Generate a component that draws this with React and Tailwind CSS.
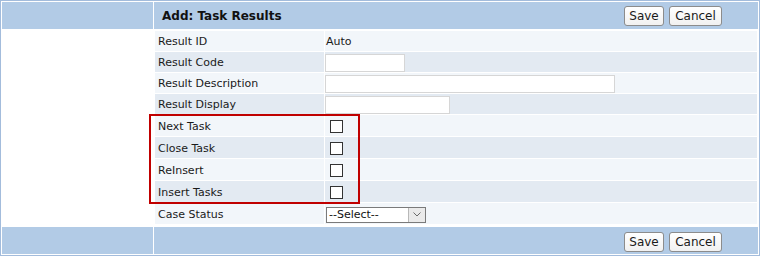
const rows = [
  { label: 'Result ID', kind: 'text', value: 'Auto', h: 'h-[20px]' },
  { label: 'Result Code', kind: 'input', w: 'w-[80px]', h: 'h-[20px]' },
  { label: 'Result Description', kind: 'input', w: 'w-[290px]', h: 'h-[20px]' },
  { label: 'Result Display', kind: 'input', w: 'w-[125px]', h: 'h-[20px]' },
  { label: 'Next Task', kind: 'check', h: 'h-[21px]' },
  { label: 'Close Task', kind: 'check', h: 'h-[21px]' },
  { label: 'ReInsert', kind: 'check', h: 'h-[21px]' },
  { label: 'Insert Tasks', kind: 'check', h: 'h-[21px]' },
  { label: 'Case Status', kind: 'select', h: 'h-[21px]' },
];

const Buttons = () => (
  <div className="flex items-center gap-[5px] pr-[36px]">
    <button className="w-[40px] h-[20px] rounded-[3px] border border-[#8c8c8c] bg-gradient-to-b from-white to-[#f1f1f1] text-[12px] text-[#1a1a1a] leading-none">
      Save
    </button>
    <button className="w-[53px] h-[20px] rounded-[3px] border border-[#8c8c8c] bg-gradient-to-b from-white to-[#f1f1f1] text-[12px] text-[#1a1a1a] leading-none">
      Cancel
    </button>
  </div>
);

const Field = ({ row }) => {
  if (row.kind === 'text') {
    return <span className="pl-[1px] pt-[1px] text-[11px] text-[#1a1a1a]">{row.value}</span>;
  }
  if (row.kind === 'input') {
    return <div className={`${row.w} h-[18px] bg-white border border-[#d6d6d6]`}></div>;
  }
  if (row.kind === 'check') {
    return <div className="ml-[5px] w-[13px] h-[13px] bg-white border border-[#333333]"></div>;
  }
  return (
    <div className="ml-[1px] w-[100px] h-[16px] bg-white border border-[#7a7a7a] flex">
      <span className="flex-1 pl-[2px] text-[11px] leading-[14px] text-[#111]">--Select--</span>
      <span className="w-[17px] h-full bg-[#eaeaea] border-l border-[#b8b8b8] flex items-center justify-center">
        <svg width="8" height="5" viewBox="0 0 8 5">
          <path d="M0.5 0.5 L4 4 L7.5 0.5" fill="none" stroke="#6a6a6a" strokeWidth="1" />
        </svg>
      </span>
    </div>
  );
};

const App = () => {
  return (
    <div className="relative w-[760px] h-[256px] border border-[#a3bcdc] bg-white p-[1px] flex flex-col font-['DejaVu_Sans',Verdana,sans-serif]">
      {/* Header */}
      <div className="flex h-[27px] gap-[1px]">
        <div className="w-[151px] bg-[#b2cbe6]"></div>
        <div className="flex-1 bg-[#b2cbe6] flex items-center justify-between pl-[8px]">
          <span className="pt-[1px] text-[12px] font-bold text-[#111]">Add: Task Results</span>
          <Buttons />
        </div>
      </div>

      {/* Rows */}
      <div className="mt-[2px] flex flex-col gap-[1px] pr-[1px]">
        {rows.map((row, i) => (
          <div key={row.label} className={`flex ${row.h}`}>
            <div className="w-[153px]"></div>
            <div className={`w-[169px] flex items-center pl-[3px] pt-[3px] text-[11px] text-[#1a1a1a] ${i % 2 === 0 ? 'bg-[#f2f6fa]' : 'bg-[#e3eaf2]'}`}>
              {row.label}
            </div>
            <div className={`ml-[1px] flex-1 flex items-center pt-[2px] ${i % 2 === 0 ? 'bg-[#f2f6fa]' : 'bg-[#e3eaf2]'}`}>
              <Field row={row} />
            </div>
          </div>
        ))}
      </div>

      {/* Footer */}
      <div className="mt-auto flex h-[27px] gap-[1px]">
        <div className="w-[151px] bg-[#b2cbe6]"></div>
        <div className="flex-1 bg-[#b2cbe6] flex items-center justify-end pt-[2px]">
          <Buttons />
        </div>
      </div>

      {/* highlight box */}
      <div className="absolute left-[148px] top-[113px] w-[211px] h-[90px] border-2 border-[#c00000]"></div>
    </div>
  );
};

export default App;
